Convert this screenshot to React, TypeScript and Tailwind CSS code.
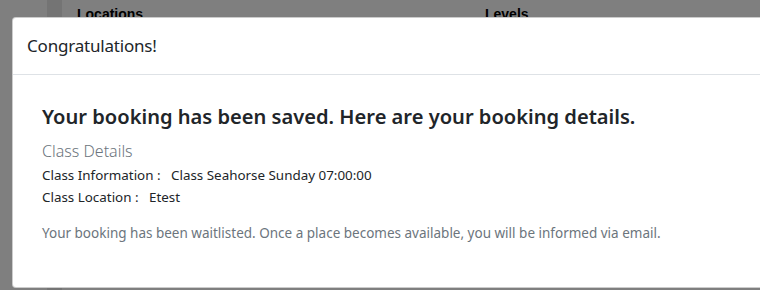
export default function App() {
  return (
    <div className="relative w-[760px] h-[290px] overflow-hidden bg-white font-['Noto_Sans',sans-serif]">
      {/* page behind the overlay */}
      <div className="flex h-full">
        <div className="w-[47px] bg-white" />
        <div className="w-[15px] bg-[#e8e8e8]" />
        <div className="flex-1 flex pt-[4px] text-[14px] font-['Liberation_Sans',sans-serif] text-black">
          <div className="w-[408px] pl-[15px] font-bold">Locations</div>
          <div className="pl-[15px] font-bold">Levels</div>
        </div>
      </div>
      <div className="absolute inset-0 bg-black/50" />

      {/* modal */}
      <div className="absolute left-[12px] top-[17px] w-[800px] h-[271px] bg-white border border-black/20 rounded-[4px]">
        <div className="px-[14px] h-[57px] flex items-center border-b border-[#dee2e6]">
          <h5 className="text-[17px] text-[#212529] tracking-[-0.2px]">Congratulations!</h5>
        </div>
        <div className="px-[29px] pt-[28px]">
          <h4 className="text-[20.1px] font-semibold text-[#212529] leading-[28px]">
            Your booking has been saved. Here are your booking details.
          </h4>
          <div className="mt-[9px] text-[16px] font-light text-[#6c757d] leading-[22px]">Class Details</div>
          <div className="text-[13.4px] text-[#212529] leading-[22px] mt-[2px]">
            <div>
              Class Information :&nbsp;&nbsp; Class Seahorse Sunday 07:00:00
            </div>
            <div>Class Location :&nbsp;&nbsp; Etest</div>
          </div>
          <p className="mt-[14px] text-[13.5px] text-[#6c757d] leading-[22px]">
            Your booking has been waitlisted. Once a place becomes available, you will be informed via email.
          </p>
        </div>
      </div>
    </div>
  )
}
